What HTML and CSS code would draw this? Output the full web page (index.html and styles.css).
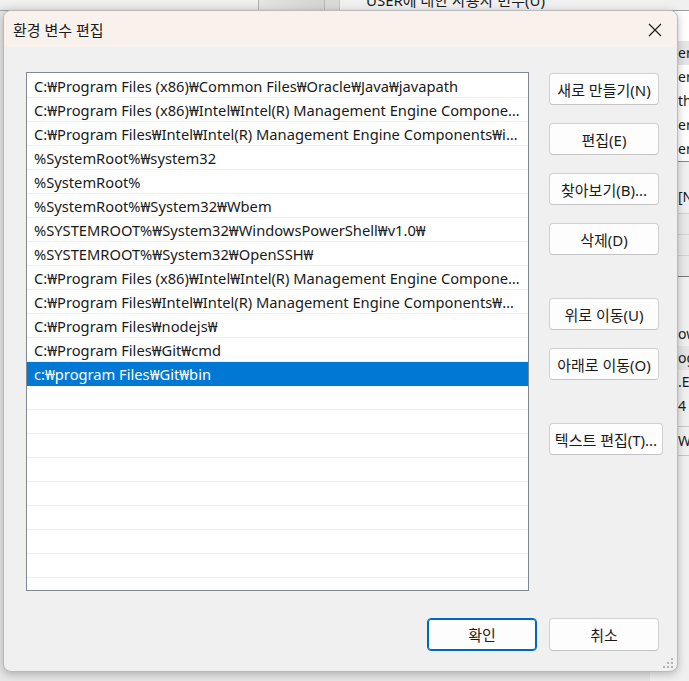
FILE: index.html
```html
<!DOCTYPE html>
<html lang="ko">

<head>
    <meta charset="UTF-8">
    <meta name="viewport" content="width=device-width, initial-scale=1.0">
    <title>환경 변수 편집</title>
    <link rel="stylesheet" href="styles.css">
</head>

<body>
    <!-- 뒤쪽 창 (시스템 속성 / 환경 변수) -->
    <div class="backdrop">
        <div class="bg-top">
            <div class="bg-seg seg1"></div>
            <div class="bg-seg seg2"></div>
            <div class="bg-seg seg3"></div>
            <div class="bg-seg seg4">
                <span class="bg-group">USER에 대한 사용자 변수(U)</span>
            </div>
        </div>
        <div class="bg-right">
            <div class="bg-list">
                <div class="bg-row hl">er</div>
                <div class="bg-row">er</div>
                <div class="bg-row">th</div>
                <div class="bg-row">er</div>
                <div class="bg-row">er</div>
            </div>
            <div class="bg-gap">
                <div class="bg-row">[N</div>
            </div>
            <div class="bg-lines">
                <div class="bg-line"></div>
                <div class="bg-line"></div>
                <div class="bg-line"></div>
            </div>
            <div class="bg-list2">
                <div class="bg-row">ow</div>
                <div class="bg-row hl">og</div>
                <div class="bg-row">.E</div>
                <div class="bg-row">4</div>
                <div class="bg-row sep">W</div>
            </div>
        </div>
    </div>

    <div class="dialog">
        <div class="titlebar">
            <span class="title">환경 변수 편집</span>
            <svg class="close" width="14" height="14" viewBox="0 0 14 14">
                <path d="M1 1 L13 13 M13 1 L1 13" stroke="#1a1a1a" stroke-width="1.1" fill="none" />
            </svg>
        </div>

        <div class="body">
            <div class="main">
                <div class="list">
                    <div class="row">C:₩Program Files (x86)₩Common Files₩Oracle₩Java₩javapath</div>
                    <div class="row">C:₩Program Files (x86)₩Intel₩Intel(R) Management Engine Components₩DAL</div>
                    <div class="row">C:₩Program Files₩Intel₩Intel(R) Management Engine Components₩iCLS</div>
                    <div class="row">%SystemRoot%₩system32</div>
                    <div class="row">%SystemRoot%</div>
                    <div class="row">%SystemRoot%₩System32₩Wbem</div>
                    <div class="row">%SYSTEMROOT%₩System32₩WindowsPowerShell₩v1.0₩</div>
                    <div class="row">%SYSTEMROOT%₩System32₩OpenSSH₩</div>
                    <div class="row">C:₩Program Files (x86)₩Intel₩Intel(R) Management Engine Components₩IPT</div>
                    <div class="row">C:₩Program Files₩Intel₩Intel(R) Management Engine Components₩DAL</div>
                    <div class="row">C:₩Program Files₩nodejs₩</div>
                    <div class="row">C:₩Program Files₩Git₩cmd</div>
                    <div class="row selected">c:₩program Files₩Git₩bin</div>
                    <div class="row"></div>
                    <div class="row"></div>
                    <div class="row"></div>
                    <div class="row"></div>
                    <div class="row"></div>
                    <div class="row"></div>
                    <div class="row"></div>
                    <div class="row"></div>
                </div>

                <div class="side">
                    <button class="btn">새로 만들기(N)</button>
                    <button class="btn">편집(E)</button>
                    <button class="btn">찾아보기(B)...</button>
                    <button class="btn">삭제(D)</button>
                    <button class="btn group">위로 이동(U)</button>
                    <button class="btn">아래로 이동(O)</button>
                    <button class="btn group wide">텍스트 편집(T)...</button>
                </div>
            </div>

            <div class="footer">
                <button class="btn primary">확인</button>
                <button class="btn">취소</button>
            </div>
        </div>

        <svg class="grip" width="12" height="12" viewBox="0 0 12 12">
            <rect x="8" y="0" width="2" height="2" fill="#b4b4b4" />
            <rect x="4" y="4" width="2" height="2" fill="#b4b4b4" />
            <rect x="8" y="4" width="2" height="2" fill="#b4b4b4" />
            <rect x="0" y="8" width="2" height="2" fill="#b4b4b4" />
            <rect x="4" y="8" width="2" height="2" fill="#b4b4b4" />
            <rect x="8" y="8" width="2" height="2" fill="#b4b4b4" />
        </svg>
    </div>
</body>

</html>
```

FILE: styles.css
```css
html,
body {
    margin: 0;
}

body {
    width: 689px;
    height: 681px;
    overflow: hidden;
    position: relative;
    background: #d9d9d9;
    font-family: "Noto Sans", "Noto Sans CJK KR", sans-serif;
    color: #1a1a1a;
}

/* 뒤쪽 창 */
.backdrop {
    position: absolute;
    left: 0;
    top: 0;
    width: 689px;
    height: 681px;
    background: #e6e6e6;
}

.bg-top {
    display: flex;
    height: 10px;
    border-bottom: 1px solid #a0a0a0;
}

.bg-seg {
    height: 10px;
}

.seg1 {
    width: 258px;
    background: linear-gradient(#f2f2f2, #e6e6e6);
}

.seg2 {
    width: 65px;
    background: linear-gradient(90deg, #e4e4e4, #d4d4d4);
    border-left: 1px solid #b0b0b0;
}

.seg3 {
    width: 14px;
    background: #dadada;
    border-left: 1px solid #b8b8b8;
}

.seg4 {
    flex: 1;
    background: #f0f0f0;
    border-left: 1px solid #c8c8c8;
    position: relative;
    overflow: hidden;
}

.bg-group {
    position: absolute;
    left: 24px;
    top: -9px;
    font-size: 15px;
    line-height: 18px;
    background: #f0f0f0;
    padding: 0 2px;
}

.bg-right {
    position: absolute;
    left: 650px;
    top: 11px;
    width: 39px;
    height: 670px;
    background: #f0f0f0;
    font-size: 14px;
}

.bg-list {
    background: #fff;
    padding-top: 30px;
    border-bottom: 1px solid #888;
}

.bg-row {
    height: 24px;
    line-height: 24px;
    padding-left: 28px;
    white-space: nowrap;
}

.bg-row.hl {
    background: #e5e5e5;
}

.bg-gap {
    padding-top: 23px;
}

.bg-lines {
    padding-top: 4px;
    border-bottom: 1px solid #777;
}

.bg-line {
    height: 20px;
    border-top: 1px solid #d0d0d0;
    background: #e9e9e9;
}

.bg-list2 {
    padding-top: 45px;
}

.bg-row.sep {
    border-top: 1px solid #c8c8c8;
    border-bottom: 1px solid #c8c8c8;
    margin-top: 8px;
    height: 28px;
    line-height: 28px;
}

/* 대화 상자 */
.dialog {
    position: absolute;
    left: 3px;
    top: 10px;
    width: 675px;
    height: 662px;
    box-sizing: border-box;
    border: 1px solid #b9b9b9;
    border-radius: 8px;
    background: #f0f0f0;
    box-shadow: 0 2px 8px rgba(0, 0, 0, 0.25);
    overflow: hidden;
}

.titlebar {
    height: 36px;
    background: #f9f1ec;
    display: flex;
    align-items: center;
    justify-content: space-between;
    padding: 0 15px 0 9px;
}

.title {
    font-size: 15px;
}

.close {
    margin-top: 1px;
}

.body {
    padding: 25px 18px 0 22px;
}

.main {
    display: flex;
    gap: 20px;
}

.list {
    flex-shrink: 0;
    width: 503px;
    height: 519px;
    box-sizing: border-box;
    border: 1px solid #828790;
    background: #fff;
    padding-top: 1px;
    overflow: hidden;
}

.row {
    height: 24px;
    box-sizing: border-box;
    border-bottom: 1px solid #f0f0f0;
    line-height: 24px;
    padding: 0 8px 0 7px;
    font-size: 14.7px;
    white-space: nowrap;
    overflow: hidden;
    text-overflow: ellipsis;
}

.row.selected {
    background: #0078d4;
    border-bottom-color: #0078d4;
    color: #fff;
}

.side {
    flex-shrink: 0;
    width: 110px;
    display: flex;
    flex-direction: column;
    align-items: flex-start;
    padding-top: 1px;
}

.btn {
    flex-shrink: 0;
    width: 110px;
    height: 32px;
    box-sizing: border-box;
    border: 1px solid #d0d0d0;
    border-bottom-color: #c4c4c4;
    border-radius: 4px;
    background: #fdfdfd;
    font-family: "Noto Sans", "Noto Sans CJK KR", sans-serif;
    font-size: 15px;
    color: #1a1a1a;
    padding: 0;
    margin-bottom: 18px;
    white-space: nowrap;
}

.btn.group {
    margin-top: 25px;
}

.btn.wide {
    width: 114px;
}

.footer {
    display: flex;
    justify-content: flex-end;
    gap: 12px;
    margin-top: 27px;
}

.footer .btn {
    height: 33px;
    margin: 0;
}

.btn.primary {
    border: 1px solid #0067c0;
    box-shadow: inset 0 0 0 1px #0067c0;
}

.grip {
    position: absolute;
    right: 2px;
    bottom: 1px;
}
```
